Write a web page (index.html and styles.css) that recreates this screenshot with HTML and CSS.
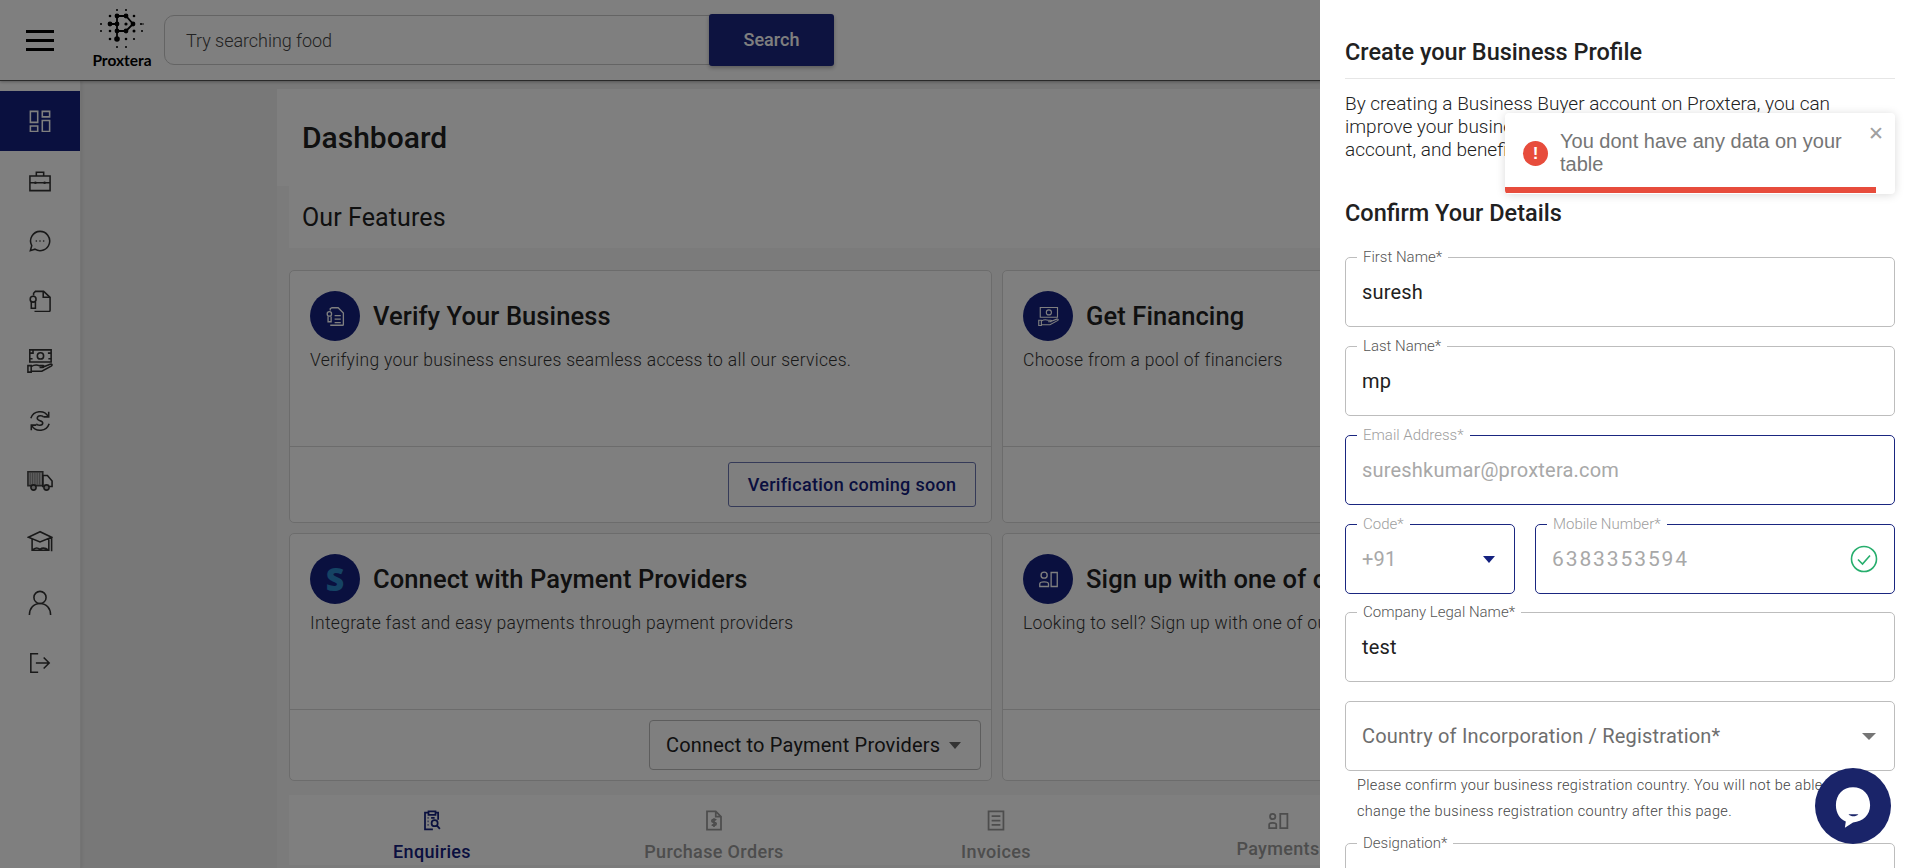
FILE: index.html
```html
<!DOCTYPE html>
<html lang="en">
<head>
<meta charset="utf-8">
<title>Proxtera Dashboard</title>
<link rel="stylesheet" href="styles.css">
</head>
<body>
<header class="topbar">
  <div class="burger"><span></span><span></span><span></span></div>
  <div class="logo">
    <svg class="logo-mark" viewBox="0 0 44 40" width="44" height="40">
      <g fill="#000">
        <circle cx="17" cy="1" r="1"/><circle cx="26" cy="1" r="1"/>
        <circle cx="10" cy="7" r="1.3"/><circle cx="17" cy="7" r="2.4"/><circle cx="26" cy="7" r="2.4"/><circle cx="34" cy="7" r="1.3"/>
        <circle cx="1" cy="15" r="1"/><circle cx="10" cy="15" r="2.4"/><circle cx="17" cy="15" r="2.4"/><circle cx="26" cy="15" r="1.6"/><circle cx="33" cy="15" r="2.4"/><circle cx="41" cy="15" r="1.1"/><circle cx="43" cy="15" r="0.8"/>
        <circle cx="1" cy="22" r="1"/><circle cx="10" cy="22" r="1.3"/><circle cx="17" cy="22" r="2.4"/><circle cx="26" cy="22" r="2.4"/><circle cx="34" cy="22" r="1.5"/><circle cx="42" cy="22" r="1"/>
        <circle cx="10" cy="30" r="1.3"/><circle cx="17" cy="30" r="2.8"/><circle cx="26" cy="30" r="1.3"/><circle cx="34" cy="30" r="1.1"/>
        <circle cx="17" cy="38" r="1"/><circle cx="26" cy="38" r="1"/>
      </g>
      <path d="M17 7H26L33 15L26 22H17M10 15H17M17 7V30" fill="none" stroke="#000" stroke-width="1.8"/>
    </svg>
    <span class="logo-text">Proxtera</span>
  </div>
  <div class="search">
    <div class="search-input">Try searching food</div>
    <div class="search-btn">Search</div>
  </div>
</header>

<div class="shell">
  <nav class="sidebar">
    <div class="side-item active">
      <svg class="ico" viewBox="0 0 24 24"><path d="M1.500 1.500h8v12h-8zM14.500 1.500h8v6h-8zM14.500 11.500h8v12h-8zM1.500 17.500h8v6h-8z"/></svg>
    </div>
    <div class="side-item">
      <svg class="ico" viewBox="0 0 24 24"><path d="M1 6.500h22v16H1zM8 6.500V2.500h8v4M1 14h22"/><circle cx="7" cy="14" r="1.400" class="solid"/><circle cx="17" cy="14" r="1.400" class="solid"/></svg>
    </div>
    <div class="side-item">
      <svg class="ico" viewBox="0 0 24 24"><path d="M12 1.500a10.500 10.500 0 1 1-5.500 19.400L1.500 22.500l1.500-5.500A10.500 10.500 0 0 1 12 1.500z"/><circle cx="8" cy="12" r=".9" class="solid"/><circle cx="12" cy="12" r=".9" class="solid"/><circle cx="16" cy="12" r=".9" class="solid"/></svg>
    </div>
    <div class="side-item">
      <svg class="ico" viewBox="0 0 24 24"><path d="M5 6V3.500L7 1.500h9l7 6.500v14a1.500 1.500 0 0 1-1.500 1.500H6"/><path d="M15.500 1.500v6.500H23"/><circle cx="4.500" cy="10" r="3.200"/><path d="M2.500 13v7h4.500v-7"/></svg>
    </div>
    <div class="side-item">
      <svg class="ico wide tall" viewBox="0 0 28 26"><path d="M3 1h23v13H3z"/><circle cx="14.500" cy="7.500" r="3.400"/><path d="M3 4.500h3.500V1M26 4.500h-3.500M3 10.500h3M26 10.500h-3"/><path d="M1 18h3.500v7H1zM4.500 19c4-2.500 6-2 9-1h4c1 0 1 2-1 2h-3M16 20l9-3.500c2-.6 2.600 1 1 2l-10 5.500H4.500"/></svg>
    </div>
    <div class="side-item">
      <svg class="ico" viewBox="0 0 24 24"><path d="M2 9A10.500 10.500 0 0 1 21 7M22 15A10.500 10.500 0 0 1 3 17"/><path d="M21.500 2v5.500H16M2.500 22v-5.500H8"/><path d="M16 8c-1-2.500-7-2.500-7 1 0 3.400 6 1.800 6 5.200 0 3.300-6 3-7 .8"/></svg>
    </div>
    <div class="side-item">
      <svg class="ico wide" viewBox="0 0 28 22"><path class="solid-truck" d="M1 1h16v15H1z"/><path d="M3.500 2v13M6 2v13M8.500 2v13M11 2v13M13.500 2v13" class="thin"/><path d="M17 5h5l5 6v6h-10z"/><circle cx="7" cy="18" r="2.800" class="wheel"/><circle cx="21" cy="18" r="2.800" class="wheel"/></svg>
    </div>
    <div class="side-item">
      <svg class="ico wide" viewBox="0 0 28 24"><path d="M14 2L1.500 8 14 13l12.500-5zM5.500 10v12h18V10M5.500 22c3-3 6-3 8.500-1 2.500-2 5.500-2 9.500 1M26.500 8v15"/></svg>
    </div>
    <div class="side-item">
      <svg class="ico big" viewBox="0 0 26 28"><circle cx="13" cy="8" r="6.600"/><path d="M1.500 27c0-7 4.500-12.500 11.500-12.500S24.500 20 24.500 27"/></svg>
    </div>
    <div class="side-item">
      <svg class="ico" viewBox="0 0 24 24"><path d="M10 2H2v20h8M7.500 12H22M16 6l6 6-6 6"/></svg>
    </div>
  </nav>

  <main class="main">
    <section class="panel">
      <h1 class="page-title">Dashboard</h1>
      <h2 class="section-title">Our Features</h2>
      <div class="cards">
        <article class="card">
          <div class="card-body">
            <div class="card-head">
              <span class="badge"><svg class="badge-ico" viewBox="0 0 24 24"><path d="M6 5V3l2-1h7l6 6v13a1 1 0 0 1-1 1H6"/><circle cx="5" cy="9" r="2.500"/><path d="M3.500 12v6h3.500v-6M11 11h7M11 15h7M11 19h7"/></svg></span>
              <h3 class="card-title">Verify Your Business</h3>
            </div>
            <p class="card-desc">Verifying your business ensures seamless access to all our services.</p>
          </div>
          <div class="card-foot"><span class="btn-outline">Verification coming soon</span></div>
        </article>
        <article class="card">
          <div class="card-body">
            <div class="card-head">
              <span class="badge"><svg class="badge-ico" viewBox="0 0 28 26"><path d="M3 1h23v13H3z"/><circle cx="14.500" cy="7.500" r="3.400"/><path d="M1 18h3.500v7H1zM4.500 19c4-2.500 6-2 9-1h4c1 0 1 2-1 2h-3M16 20l9-3.500c2-.6 2.600 1 1 2l-10 5.500H4.500"/></svg></span>
              <h3 class="card-title">Get Financing</h3>
            </div>
            <p class="card-desc">Choose from a pool of financiers</p>
          </div>
          <div class="card-foot"></div>
        </article>
        <article class="card short">
          <div class="card-body">
            <div class="card-head">
              <span class="badge"><span class="badge-s">S</span></span>
              <h3 class="card-title">Connect with Payment Providers</h3>
            </div>
            <p class="card-desc">Integrate fast and easy payments through payment providers</p>
          </div>
          <div class="card-foot tight"><span class="btn-select">Connect to Payment Providers<i class="caret"></i></span></div>
        </article>
        <article class="card short">
          <div class="card-body">
            <div class="card-head">
              <span class="badge"><svg class="badge-ico" viewBox="0 0 24 24"><circle cx="7" cy="7" r="3.500"/><path d="M2 20v-3c0-3 10-3 10 0v3zM15 4h7v16h-7z"/></svg></span>
              <h3 class="card-title">Sign up with one of our Partners</h3>
            </div>
            <p class="card-desc">Looking to sell? Sign up with one of our partners</p>
          </div>
          <div class="card-foot tight"></div>
        </article>
      </div>
      <div class="tabs">
        <div class="tab current">
          <svg class="tab-ico" viewBox="0 0 20 24"><path d="M6 3H2v19h9M14 3h3v8M6 1.500h8v4H6zM5 9h1M9 9h4M5 13h1M5 17h1"/><circle cx="13" cy="15" r="3.500"/><path d="M15.500 17.500l3.500 4"/></svg>
          <span>Enquiries</span>
        </div>
        <div class="tab">
          <svg class="tab-ico" viewBox="0 0 20 24"><path d="M2 1.500h10l6 6V22.500H2zM12 1.500v6h6"/><path d="M12.500 11.500c-1-1-5-1.200-5 1 0 2.300 5 1 5 3.300 0 2.200-4 2-5 1M10 9.500v10"/></svg>
          <span>Purchase Orders</span>
        </div>
        <div class="tab">
          <svg class="tab-ico" viewBox="0 0 20 24"><path d="M1.500 1.500h17v21h-17zM5 7h10M5 12h10M5 17h10"/></svg>
          <span>Invoices</span>
        </div>
        <div class="tab raised">
          <svg class="tab-ico flat" viewBox="0 0 24 18"><circle cx="5.500" cy="4" r="3"/><path d="M1.500 17v-4c0-2.500 8-2.500 8 0v4zM14 1h8v16h-8z"/></svg>
          <span>Payments</span>
        </div>
      </div>
    </section>
  </main>
</div>

<div class="scrim"></div>

<aside class="drawer">
  <h2 class="drawer-title">Create your Business Profile</h2>
  <p class="drawer-intro">By creating a Business Buyer account on Proxtera, you can improve your business profile, get a verified<br>account, and benefit from all our services.</p>
  <h2 class="drawer-sub">Confirm Your Details</h2>
  <div class="form">
    <div class="field"><label class="field-label">First Name*</label><span class="field-value">suresh</span></div>
    <div class="field"><label class="field-label">Last Name*</label><span class="field-value">mp</span></div>
    <div class="field locked"><label class="field-label">Email Address*</label><span class="field-value">sureshkumar@proxtera.com</span></div>
    <div class="field-row">
      <div class="field locked code"><label class="field-label">Code*</label><span class="field-value">+91</span><i class="arrow navy"></i></div>
      <div class="field locked mobile"><label class="field-label">Mobile Number*</label><span class="field-value digits">6383353594</span>
        <svg class="ok" viewBox="0 0 28 28"><circle cx="14" cy="14" r="12.500"/><path d="M8 14.500l4.500 4.500L20 10.500"/></svg>
      </div>
    </div>
    <div class="field"><label class="field-label">Company Legal Name*</label><span class="field-value">test</span></div>
    <div class="field-group">
      <div class="field"><span class="field-value muted">Country of Incorporation / Registration*</span><i class="arrow"></i></div>
      <p class="helper">Please confirm your business registration country. You will not be able to change the business registration country after this page.</p>
    </div>
    <div class="field"><label class="field-label">Designation*</label></div>
  </div>
</aside>

<div class="toast">
  <span class="toast-ico">!</span>
  <span class="toast-text">You dont have any data on your table</span>
  <span class="toast-close">✕</span>
  <span class="toast-bar"></span>
</div>

<div class="chat">
  <svg class="chat-ico" viewBox="0 0 40 48"><path d="M20 1C9 1 1 9 1 21c0 9 5 16 11 18l-1 7 9-6c11-1 19-8 19-19C39 9 31 1 20 1z" fill="#fff"/><path d="M15 31c3 3 8 3 11 0z" fill="#1a2469"/></svg>
</div>
</body>
</html>
```

FILE: styles.css
```css
* { box-sizing: border-box; }
html, body { margin: 0; height: 868px; overflow: hidden; }
body { font-family: Roboto, "Liberation Sans", sans-serif; background: #f0f0f0; color: #212121; display: flex; flex-direction: column; }
h1, h2, h3, p { margin: 0; }

.topbar { height: 81px; flex: none; display: flex; align-items: center; background: #fff; border-bottom: 1px solid #555; box-shadow: 0 1px 3px rgba(0,0,0,.3); position: relative; z-index: 2; }
.burger { width: 80px; display: flex; flex-direction: column; align-items: center; gap: 6px; flex: none; }
.burger span { width: 28px; height: 3px; background: #000; }
.logo { width: 84px; display: flex; flex-direction: column; align-items: center; flex: none; margin-top: -3px; }
.logo-mark { display: block; }
.logo-text { font-family: Lato, sans-serif; font-size: 15.500px; font-weight: 700; color: #000; line-height: 16px; margin-top: 3px; }
.search { display: flex; align-items: center; }
.search-input { width: 548px; height: 50px; margin-right: -3px; border: 1px solid #c8c8c8; border-radius: 10px 0 0 10px; padding-left: 21px; display: flex; align-items: center; font-size: 18px; font-weight: 300; color: #444; letter-spacing: -.05px; }
.search-btn { width: 125px; height: 52px; padding-bottom: 2px; background: #1a2680; border-radius: 3px; color: #fff; font-size: 18px; font-weight: 500; display: flex; align-items: center; justify-content: center; box-shadow: 0 2px 4px rgba(0,0,0,.3); position: relative; }

.shell { flex: 1; display: flex; min-height: 0; }
.sidebar { width: 81px; flex: none; background: #fff; border-right: 1px solid #e8e8e8; box-shadow: 1px 0 3px rgba(0,0,0,.08); padding-top: 10px; display: flex; flex-direction: column; }
.side-item { height: 60px; flex: none; display: flex; align-items: center; justify-content: center; }
.side-item:nth-child(n+9) { padding-top: 3px; }
.side-item.active { background: #14217f; }
.ico { width: 22px; height: 22px; fill: none; stroke: #333; stroke-width: 1.700; }
.ico.wide { width: 26px; height: 24px; }
.ico.tall { height: 26px; }
.ico.big { width: 24px; height: 26px; }
.ico .solid { fill: #333; stroke: none; }
.ico .solid-truck { fill: #bbb; stroke: #444; }
.ico .thin { stroke-width: .7; stroke: #666; }
.ico .wheel { fill: #bbb; stroke: #333; }
.active .ico { stroke: #fff; }

.main { flex: 1; min-width: 0; padding: 8px 0 0 196px; }
.panel { width: 1446px; background: #f7f7f7; height: 100%; }
.page-title { height: 97px; padding-left: 25px; font-size: 30px; font-weight: 500; display: flex; align-items: center; background: #fff; }
.section-title { height: 62px; margin: 0 0 22px 12px; padding-left: 13px; font-size: 25px; font-weight: 400; letter-spacing: .1px; display: flex; align-items: center; background: #fff; }
.cards { display: grid; grid-template-columns: 703px 703px; column-gap: 10px; row-gap: 10px; margin-left: 12px; }
.card { height: 253px; border: 1px solid #d9d9d9; border-radius: 5px; display: flex; flex-direction: column; background: #fff; }
.card.short { height: 248px; }
.card-body { flex: 1; padding: 20px 20px 0; }
.card-head { display: flex; align-items: center; gap: 13px; }
.badge { width: 50px; height: 50px; border-radius: 50%; background: #14217f; display: flex; align-items: center; justify-content: center; flex: none; }
.badge-ico { width: 21px; height: 21px; fill: none; stroke: #fff; stroke-width: 1.500; }
.badge-s { font-family: "Open Sans", sans-serif; font-size: 32px; font-weight: 800; color: #2a86c8; line-height: 1; }
.card-title { font-size: 25.500px; font-weight: 500; letter-spacing: .1px; color: #212121; }
.card-desc { font-size: 17.500px; font-weight: 300; letter-spacing: .3px; color: #333; margin-top: 9px; }
.card-foot { height: 76px; flex: none; border-top: 1px solid #d9d9d9; display: flex; align-items: center; justify-content: flex-end; padding-right: 15px; }
.card-foot.tight { height: 71px; padding-right: 10px; }
.btn-outline { height: 45px; width: 248px; border: 1px solid #6a74b0; border-radius: 3px; display: flex; align-items: center; justify-content: center; font-size: 18px; font-weight: 500; color: #14217f; letter-spacing: .3px; }
.btn-select { height: 50px; width: 332px; border: 1px solid #bbb; border-radius: 4px; display: flex; align-items: center; padding-left: 16px; font-size: 20px; font-weight: 400; letter-spacing: .18px; color: #222; gap: 9px; }
.caret { width: 0; height: 0; border: 6px solid transparent; border-top: 7px solid #666; border-bottom: 0; }
.tabs { display: flex; margin: 14px 0 0 12px; padding-left: 2px; height: 70px; background: #fff; }
.tab { width: 282px; display: flex; flex-direction: column; align-items: center; color: #9a9a9a; font-size: 18px; font-weight: 500; letter-spacing: .35px; padding-top: 15px; gap: 10px; }
.tab.current { color: #14217f; }
.tab.raised { padding-top: 18px; gap: 9px; }
.tab-ico { width: 20px; height: 21px; fill: none; stroke: #9a9a9a; stroke-width: 2; }
.tab-ico.flat { width: 23px; height: 16px; }
.current .tab-ico { stroke: #14217f; }

.scrim { position: fixed; inset: 0; background: rgba(0,0,0,.5); z-index: 5; }

.drawer { position: fixed; top: 0; right: 0; bottom: 0; width: 600px; background: #fff; z-index: 6; padding: 0 25px; overflow: hidden; }
.drawer-title { height: 79px; padding-top: 39px; font-size: 23.500px; font-weight: 500; line-height: 26px; border-bottom: 1px solid #e6e6e6; color: #212121; }
.drawer-intro { font-size: 19px; font-weight: 300; line-height: 23px; color: #222; margin-top: 13px; height: 69px; }
.drawer-sub { font-size: 23.500px; font-weight: 500; line-height: 26px; margin-top: 39px; color: #212121; }
.form { display: flex; flex-direction: column; gap: 19px; margin-top: 31px; }
.field { height: 70px; position: relative; border: 1px solid #bdbdbd; border-radius: 5px; display: flex; align-items: center; padding: 0 16px; }
.field-row { display: flex; gap: 20px; margin-bottom: -1px; }
.field.code { width: 170px; flex: none; }
.field.mobile { flex: 1; }
.field.locked { border-color: #1a2680; }
.field-label { position: absolute; top: -9px; left: 11px; background: #fff; padding: 0 6px; font-size: 15px; font-weight: 300; line-height: 17px; color: #555; }
.locked .field-label { color: #9e9e9e; }
.field-value { font-size: 20px; font-weight: 400; color: #212121; letter-spacing: .2px; }
.locked .field-value { color: #a8a8a8; }
.field-value.digits { font-size: 21px; letter-spacing: 1.900px; }
.field-value.muted { color: #6e6e6e; letter-spacing: .2px; padding-bottom: 1px; }
.arrow { position: absolute; right: 18px; top: 50%; margin-top: -3px; width: 0; height: 0; border: 7px solid transparent; border-top: 7px solid #757575; border-bottom: 0; }
.arrow.navy { border: 6px solid transparent; border-top: 7px solid #14217f; border-bottom: 0; right: 19px; }
.ok { position: absolute; right: 16px; top: 50%; margin-top: -14px; width: 28px; height: 28px; fill: none; stroke: #27ae6d; stroke-width: 1.600; }
.field-group { display: flex; flex-direction: column; }
.helper { font-size: 14.500px; font-weight: 300; letter-spacing: .33px; line-height: 26px; color: #444; padding: 2px 12px 0; margin-bottom: -1px; }

.toast { position: fixed; left: 1505px; top: 113px; width: 390px; height: 81px; background: #fff; border-radius: 4px; box-shadow: 0 1px 10px rgba(0,0,0,.15); z-index: 9; padding: 17px 40px 0 55px; overflow: hidden; }
.toast-ico { position: absolute; left: 18px; top: 28px; width: 25px; height: 25px; border-radius: 50%; background: #e74c3c; color: #fff; font: 700 17px/25px "Liberation Sans", sans-serif; text-align: center; }
.toast-text { display: block; font-family: "Liberation Sans", sans-serif; font-size: 20px; line-height: 23px; color: #757575; }
.toast-close { position: absolute; right: 11px; top: 8px; font-size: 19px; line-height: 24px; color: #a0a0a0; font-family: "DejaVu Sans", sans-serif; }
.toast-bar { position: absolute; left: 0; bottom: 1px; height: 6px; width: 371px; background: #e74c3c; }

.chat { position: fixed; left: 1815px; top: 768px; width: 76px; height: 76px; border-radius: 50%; background: #1a2469; z-index: 10; display: flex; align-items: center; justify-content: center; }
.chat-ico { width: 36px; height: 44px; margin-top: 4px; }
```
